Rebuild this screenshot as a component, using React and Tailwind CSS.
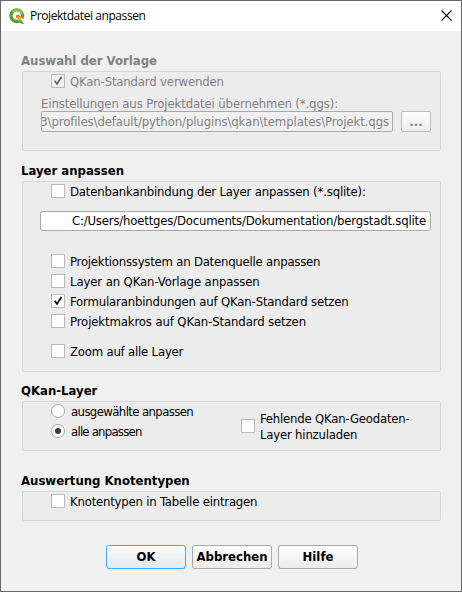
import React from "react";

const CheckMark = ({ color }) => (
  <svg width="12" height="12" viewBox="0 0 12 12" fill="none" stroke={color} strokeWidth="1.8">
    <path d="M2.6 5.8 L5 9 L9.4 2" />
  </svg>
);

function Check({ children, checked, disabled, className = "", tracking = "tracking-[-0.16px]" }) {
  return (
    <div className={`flex h-[14px] items-center gap-[5px] ${className}`}>
      <span
        className={`flex size-[14px] shrink-0 items-center justify-center border border-[#bababa] ${
          disabled ? "bg-[#f0f0f0]" : "bg-white"
        }`}
      >
        {checked && <CheckMark color={disabled ? "#6a6a6a" : "#111111"} />}
      </span>
      <span className={`whitespace-nowrap pt-[2px] leading-[16px] ${tracking}`}>{children}</span>
    </div>
  );
}

function Radio({ children, checked, tracking }) {
  return (
    <div className="flex h-[14px] items-center gap-[6px]">
      <span className="flex size-[14px] shrink-0 items-center justify-center rounded-full border border-[#a8a8a8] bg-white">
        {checked && <span className="size-[6px] rounded-full bg-[#3a3a3a]" />}
      </span>
      <span className={`whitespace-nowrap pt-[2px] leading-[16px] ${tracking}`}>{children}</span>
    </div>
  );
}

function Section({ title, titleClass = "", boxClass = "", children }) {
  return (
    <section className="w-[419px]">
      <h2 className={`-ml-px h-[20px] whitespace-nowrap text-[13px] font-bold leading-[20px] ${titleClass}`}>{title}</h2>
      <div className={`rounded-[2px] border border-[#d5d5d5] bg-[#ececec] ${boxClass}`}>{children}</div>
    </section>
  );
}

function Button({ children, primary }) {
  return (
    <button
      className={`h-[24px] w-[80px] whitespace-nowrap rounded-[3px] border bg-gradient-to-b text-[13px] font-bold leading-[22px] ${
        primary ? "border-[#3daefd] from-[#fcfdfe] to-[#e2e8ee]" : "border-[#a9a9a9] from-[#fefefe] to-[#ececec]"
      }`}
    >
      {children}
    </button>
  );
}

export default function App() {
  return (
    <div className="flex h-[592px] w-[462px] flex-col overflow-hidden border border-[#686864] bg-[#f0f0f0] font-['DejaVu_Sans_Condensed','DejaVu_Sans',sans-serif] text-[13px] text-black [font-stretch:condensed]">
      <header className="flex h-[30px] shrink-0 items-center bg-white pl-[8px] pr-[9px]">
        <svg width="17" height="17" viewBox="0 0 17 17">
          <circle cx="7.7" cy="7.7" r="5.8" fill="none" stroke="#5d9f31" strokeWidth="3.4" />
          <path d="M3.6 3.6 A5.8 5.8 0 0 1 13.2 6" fill="none" stroke="#8dc04b" strokeWidth="2.4" />
          <path d="M7 7h3.4l1.2 1.4v2.8H9.8L7 9.3z" fill="#ee7d22" />
          <path d="M11 11l4.5 4.6" stroke="#fff" strokeWidth="4.6" />
          <path d="M11.6 11.2l3.6 4.6h-3l-2.7-3z" fill="#5d9f31" />
          <path d="M9.4 9.5l2.5 2.5" stroke="#f2b52c" strokeWidth="2" />
        </svg>
        <span className="ml-[4px] whitespace-nowrap font-['Open_Sans','Noto_Sans',sans-serif] text-[12px] leading-[16px] tracking-[-0.43px] [font-stretch:normal]">
          Projektdatei anpassen
        </span>
        <svg className="-mt-px ml-auto" width="11" height="11" viewBox="0 0 11 11" stroke="#000" strokeWidth="1.1">
          <path d="M.5 .5l10 10M10.5 .5l-10 10" />
        </svg>
      </header>

      <main className="flex flex-col pl-[21px] pt-[20px]">
        <Section title="Auswahl der Vorlage" titleClass="text-[#808080]" boxClass="h-[80px] pl-[18px] pt-[2px] text-[#808080]">
          <Check checked disabled className="ml-[10px]">QKan-Standard verwenden</Check>
          <div className="mt-[8px] h-[15px] whitespace-nowrap leading-[16px] tracking-[-0.12px]">
            Einstellungen aus Projektdatei übernehmen (*.qgs):
          </div>
          <div className="flex gap-[8px]">
            <div className="flex h-[21px] w-[352px] items-center justify-end overflow-hidden rounded-[2px] border border-[#a9a9a9] bg-[#f0f0f0] pr-[3px]">
              <span className="whitespace-nowrap tracking-[-0.1px]">3\profiles\default/python/plugins\qkan\templates\Projekt.qgs</span>
            </div>
            <button className="h-[21px] w-[30px] rounded-[2px] border border-[#bcbcbc] bg-gradient-to-b from-[#fefefe] to-[#ededed] font-bold leading-[19px]">
              ...
            </button>
          </div>
        </Section>

        <div className="mt-[10px]">
          <Section title="Layer anpassen" boxClass="h-[191px] pl-[17px] pt-[2px]">
            <Check className="ml-[11px]">Datenbankanbindung der Layer anpassen (*.sqlite):</Check>
            <div className="mt-[13px] flex h-[20px] w-[391px] items-center justify-end rounded-[3px] border border-[#a9a9a9] bg-white pr-[4px]">
              <span className="whitespace-nowrap tracking-[-0.19px]">C:/Users/hoettges/Documents/Dokumentation/bergstadt.sqlite</span>
            </div>
            <div className="ml-[11px] mt-[23px] flex flex-col gap-[6px]">
              <Check tracking="tracking-[-0.22px]">Projektionssystem an Datenquelle anpassen</Check>
              <Check tracking="tracking-[-0.11px]">Layer an QKan-Vorlage anpassen</Check>
              <Check tracking="tracking-[-0.17px]" checked>Formularanbindungen auf QKan-Standard setzen</Check>
              <Check tracking="tracking-[-0.12px]">Projektmakros auf QKan-Standard setzen</Check>
              <Check tracking="tracking-[-0.2px]" className="mt-[10px]">Zoom auf alle Layer</Check>
            </div>
          </Section>
        </div>

        <div className="mt-[9px]">
          <Section title="QKan-Layer" boxClass="flex h-[50px] pl-[28px] pt-[2px]">
            <div className="flex w-[190px] flex-col gap-[6px]">
              <Radio tracking="tracking-[-0.6px]">ausgewählte anpassen</Radio>
              <Radio tracking="tracking-[-0.77px]" checked>alle anpassen</Radio>
            </div>
            <div className="flex h-[44px] items-center gap-[5px]">
              <span className="size-[14px] border border-[#bababa] bg-white" />
              <span className="whitespace-nowrap pt-[2px] leading-[16px] tracking-[-0.2px]">
                Fehlende QKan-Geodaten-
                <br />
                Layer hinzuladen
              </span>
            </div>
          </Section>
        </div>

        <div className="mt-[20px]">
          <Section title="Auswertung Knotentypen" boxClass="h-[30px] pl-[28px] pt-[2px]">
            <Check tracking="tracking-[-0.2px]">Knotentypen in Tabelle eintragen</Check>
          </Section>
        </div>

        <footer className="ml-[84px] mt-[24px] flex gap-[6px]">
          <Button primary>OK</Button>
          <Button>Abbrechen</Button>
          <Button>Hilfe</Button>
        </footer>
      </main>
    </div>
  );
}
